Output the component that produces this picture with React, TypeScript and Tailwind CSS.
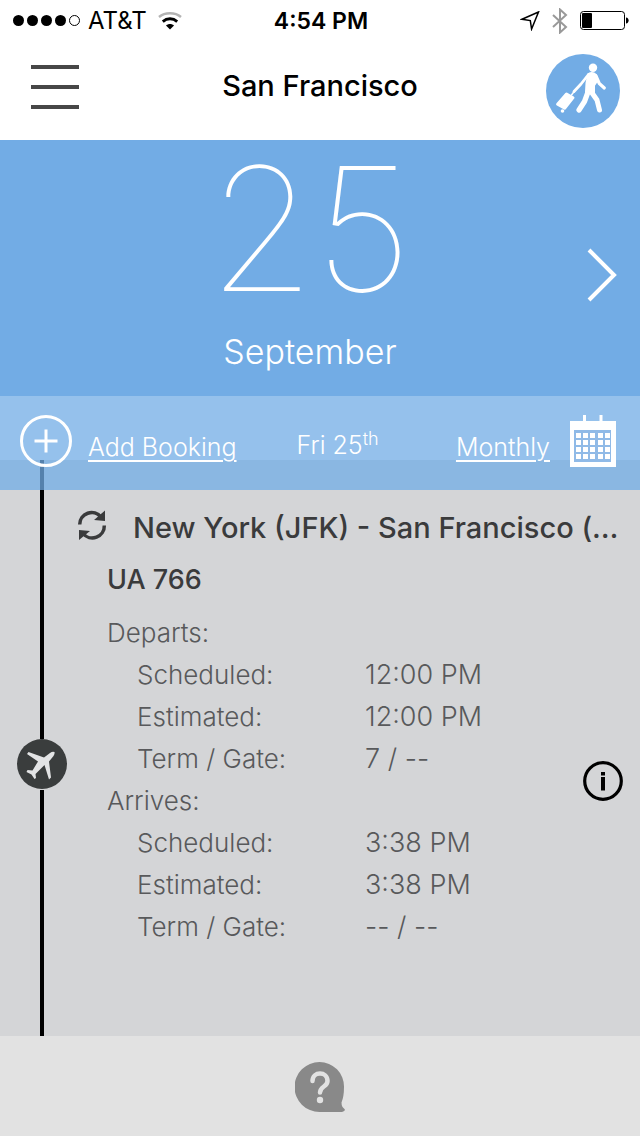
interface FlightRow {
  label: string;
  value?: string;
}

const flightRows: FlightRow[] = [
  { label: "Departs:" },
  { label: "Scheduled:", value: "12:00 PM" },
  { label: "Estimated:", value: "12:00 PM" },
  { label: "Term / Gate:", value: "7 / --" },
  { label: "Arrives:" },
  { label: "Scheduled:", value: "3:38 PM" },
  { label: "Estimated:", value: "3:38 PM" },
  { label: "Term / Gate:", value: "-- / --" },
];

function WifiIcon() {
  return (
    <svg width="24" height="18" viewBox="0 0 24 18" fill="none">
      <path d="M1 5C7 0 17 0 23 5" stroke="#b3b3b3" strokeWidth="2.4" />
      <path d="M4.800 9.600C9 5.800 15 5.800 19.200 9.600" stroke="#000" strokeWidth="2.8" />
      <path d="M8 13.400c2.400-2 5.600-2 8 0L12 17.500z" fill="#000" />
    </svg>
  );
}

function LocationIcon() {
  return (
    <svg width="20" height="20" viewBox="0 0 20 20" fill="none" stroke="#000" strokeWidth="1.5">
      <path d="M18.500 1L2 8.300l8.300 1.300 1.300 8.400z" strokeLinejoin="miter" />
    </svg>
  );
}

function BluetoothIcon() {
  return (
    <svg width="16" height="26" viewBox="0 0 16 26" fill="none" stroke="#999" strokeWidth="2">
      <path d="M1 7l13 12-6 5.500V1.500L14 7 1 19" />
    </svg>
  );
}

function BatteryIcon() {
  return (
    <svg width="49" height="20" viewBox="0 0 49 20">
      <rect x="0.500" y="0.500" width="44" height="18" rx="3" fill="none" stroke="#000" />
      <rect x="2" y="2" width="10" height="15" rx="1" fill="#000" />
      <path d="M46 6.500c3.500 0 3.500 6 0 6z" fill="#000" />
    </svg>
  );
}

function TravellerIcon() {
  return (
    <svg width="74" height="74" viewBox="0 0 74 74" fill="none" stroke="#fff" strokeLinecap="round" strokeLinejoin="round">
      <circle cx="37" cy="37" r="37" fill="#72ace5" stroke="none" />
      <circle cx="47" cy="13.700" r="4.200" fill="#fff" stroke="none" />
      <path d="M42.500 20q4-2.500 7.500 1l1 6-3 4.500 0 7.500-8-1 .5-9z" fill="#fff" strokeWidth="2" />
      <path d="M42.500 20.500L35 30l-7 7.500" strokeWidth="2.800" />
      <path d="M50 22l3.300 7.500 5 4.500" strokeWidth="3.200" />
      <path d="M42 38L38.500 47.500 33 56" strokeWidth="5.200" />
      <path d="M45 37.500L51 46l2.500 10" strokeWidth="5" />
      <path d="M28.500 37l-3 4" strokeWidth="1.500" />
      <path d="M20.500 40l6.500 3.700-8.200 10.500-7.200-4z" fill="#fff" strokeWidth="3" />
      <circle cx="16.500" cy="57" r="1.800" fill="#fff" stroke="none" />
    </svg>
  );
}

function CalendarIcon() {
  const columns = [5, 12, 19, 27, 34];
  const lines = [16, 23, 30, 37];

  return (
    <svg width="46" height="52" viewBox="0 0 46 52" fill="#fff">
      <path d="M13 0h3v8h-3zM29.500 0h3v8h-3zM0 6h46v46H0z" />
      <path d="M4 15h37v32H4z" fill="#90bae7" />
      {lines.map((y) =>
        columns.map((x) => <rect key={`${x}-${y}`} x={x + 1} y={y + 2} width="5" height="5" />)
      )}
    </svg>
  );
}

function RefreshIcon() {
  return (
    <svg width="30" height="31" viewBox="0 0 30 31">
      <path d="M2.700 14.500A12 12 0 0 1 24 7M27.300 15.500A12 12 0 0 1 6 23.500" fill="none" stroke="#3a3b3c" strokeWidth="3.500" />
      <path d="M28 0.500v10.500l-11-1zM2 30V20l11 1z" fill="#3a3b3c" />
    </svg>
  );
}

function PlaneIcon() {
  return (
    <svg width="50" height="50" viewBox="0 0 50 50">
      <circle cx="25" cy="25" r="25" fill="#3a3d3d" />
      <path
        d="M37.500 13q-2-1-4.500 1l-6 4.500L11.500 13 10 15l11 7.500-5.500 9-5-.5-1 2 5 2.500L17.500 40l1.500-1-.500-4 9-9 4.500 14.500 2-2-2-16 4.500-5.500q1.500-2.500 1-4z"
        fill="#e3e4e5"
      />
    </svg>
  );
}

function InfoIcon() {
  return (
    <svg width="40" height="40" viewBox="0 0 40 40">
      <circle cx="20" cy="20" r="18.300" fill="none" stroke="#000" strokeWidth="3.200" />
      <path d="M18 11h4v3.500h-4zM18 16h4v13.500h-4z" />
    </svg>
  );
}

function HelpIcon() {
  return (
    <svg width="50" height="50" viewBox="0 0 50 50" fill="none">
      <path d="M24.500 0a24.500 24.500 0 0 0 0 50H47q4-1 2.500-3-3-2-3-6.500 2.500-6 2.500-15.500A24.500 24.500 0 0 0 24.500 0z" fill="#898989" />
      <path d="M17.500 19c0-10 15-10 15 0 0 6-7.500 5-7.500 11.500" stroke="#e2e2e2" strokeWidth="4.500" strokeLinecap="round" />
      <circle cx="25" cy="38" r="3.200" fill="#e2e2e2" />
    </svg>
  );
}

function StatusBar() {
  return (
    <div className="grid h-10 grid-cols-3 items-center pt-px pr-[11px] pl-[13px] text-black">
      <div className="flex items-center">
        <div className="flex gap-[3px]">
          <span className="size-[11px] rounded-full bg-black" />
          <span className="size-[11px] rounded-full bg-black" />
          <span className="size-[11px] rounded-full bg-black" />
          <span className="size-[11px] rounded-full bg-black" />
          <span className="size-[11px] rounded-full border border-black" />
        </div>
        <span className="mr-[11px] ml-2 text-2xl font-normal">AT&amp;T</span>
        <WifiIcon />
      </div>
      <span className="text-center text-[23px] leading-8 font-semibold">4:54 PM</span>
      <div className="flex items-center justify-end gap-3">
        <LocationIcon />
        <BluetoothIcon />
        <BatteryIcon />
      </div>
    </div>
  );
}

function NavBar() {
  return (
    <header className="grid h-[100px] grid-cols-[80px_1fr_80px] items-start px-5 pt-[14px]">
      <button type="button" aria-label="Menu" className="mt-[11px] ml-[11px] flex w-12 flex-col gap-4">
        <span className="h-1 w-full bg-[#474747]" />
        <span className="h-1 w-full bg-[#474747]" />
        <span className="h-1 w-full bg-[#474747]" />
      </button>
      <h1 className="mt-3 text-center text-[29px] leading-10 font-medium text-black">San Francisco</h1>
      <button type="button" aria-label="My trips" className="justify-self-end">
        <TravellerIcon />
      </button>
    </header>
  );
}

export default function App() {
  return (
    <div className="flex min-h-screen flex-col bg-white font-['Inter','Liberation_Sans',sans-serif]">
      <StatusBar />
      <NavBar />

      <section className="grid h-64 grid-cols-[60px_1fr_80px] items-start bg-[#72ace5] text-white">
        <span />
        <div className="flex flex-col items-center">
          <p className="pt-1 text-[172px] leading-[168px] font-thin">25</p>
          <p className="mt-5 text-[34px] leading-10 font-light">September</p>
        </div>
        <button type="button" aria-label="Next day" className="mt-[108px] flex justify-center pl-1">
          <svg width="30" height="54" viewBox="0 0 30 54" fill="none" stroke="#fff" strokeWidth="4">
            <path d="M2 2l25 25L2 52" />
          </svg>
        </button>
      </section>

      {/* translucent strip, the timeline slides under its lower edge */}
      <nav className="relative z-10 flex h-[94px] items-start bg-[#72ace5]/75 pt-[19px] pr-6 pl-5 text-[25px] leading-10 font-light text-white">
        <a href="#add" className="flex gap-4">
          <svg width="52" height="52" viewBox="0 0 52 52" fill="none" stroke="#fff" strokeWidth="3">
            <circle cx="26" cy="26" r="24.500" />
            <path d="M14.500 26h23M26 14.500v23" />
          </svg>
          <span className="mt-3 underline decoration-2 underline-offset-4">Add Booking</span>
        </a>
        <p className="mt-[10px] ml-[60px]">
          Fri 25<sup className="text-lg">th</sup>
        </p>
        <a href="#monthly" className="ml-auto flex gap-5">
          <span className="mt-3 underline decoration-2 underline-offset-4">Monthly</span>
          <CalendarIcon />
        </a>
      </nav>

      <main className="-mt-[30px] flex flex-1 bg-[#d4d5d7]">
        <div className="flex w-[84px] shrink-0 flex-col items-center">
          <span className="h-[279px] w-1 bg-black" />
          <PlaneIcon />
          <span className="mt-px w-1 flex-1 bg-black" />
        </div>

        <article className="min-w-0 flex-1 pt-[48px] pr-[17px]">
          <div className="-ml-[7px] flex items-center gap-[26px] text-[#3a3b3c]">
            <button type="button" aria-label="Refresh" className="-mt-[5px]">
              <RefreshIcon />
            </button>
            <h2 className="truncate text-[29px] leading-10 font-medium">New York (JFK) - San Francisco (…</h2>
          </div>
          <div className="flex items-center justify-between pl-[23px]">
            <div className="flex-1">
              <h3 className="mt-3 mb-3 text-[27px] leading-10 font-medium text-[#3a3b3c]">UA 766</h3>
              <dl className="text-[26px] leading-[42px] font-light text-[#58595b]">
                {flightRows.map((row, index) => (
                  <div key={index} className="flex">
                    {row.value ? (
                      <>
                        <dt className="w-[258px] pl-[30px]">{row.label}</dt>
                        <dd className="text-[27px]">{row.value}</dd>
                      </>
                    ) : (
                      <dt>{row.label}</dt>
                    )}
                  </div>
                ))}
              </dl>
            </div>
            <button type="button" aria-label="Flight details" className="mt-[66px]">
              <InfoIcon />
            </button>
          </div>
        </article>
      </main>

      <footer className="flex h-[100px] items-center justify-center bg-[#e2e2e2] pt-px">
        <button type="button" aria-label="Help">
          <HelpIcon />
        </button>
      </footer>
    </div>
  );
}
